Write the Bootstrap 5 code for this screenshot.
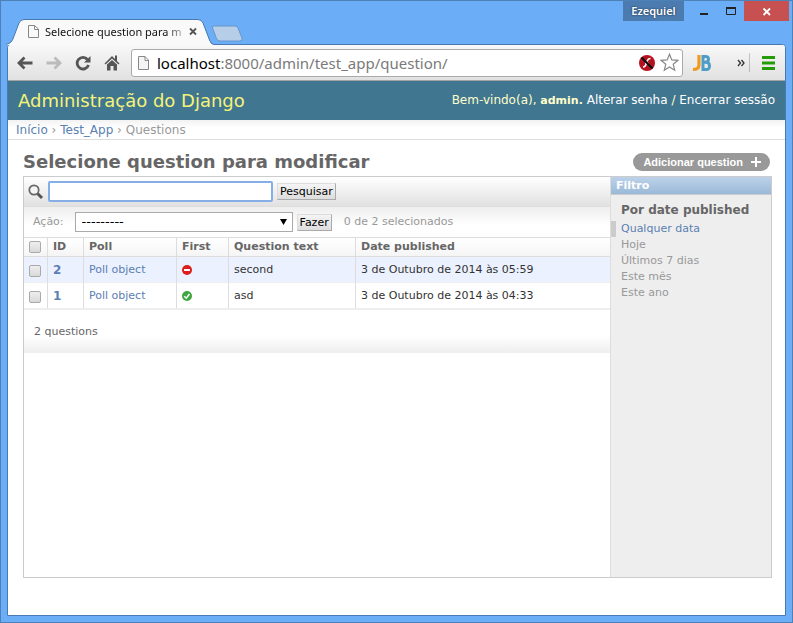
<!DOCTYPE html>
<html lang="pt-BR">
<head>
<meta charset="utf-8">
<meta name="viewport" content="width=device-width, initial-scale=1">
<title>Selecione question para modificar</title>
<link href="https://cdn.jsdelivr.net/npm/bootstrap@5.3.0/dist/css/bootstrap.min.css" rel="stylesheet">
<style>
body{background:#6badf6;border:1px solid #4d82b8;font-family:"DejaVu Sans",Verdana,sans-serif;font-size:11px;line-height:16px;color:#333}
a{text-decoration:none;color:#5b80b2}
svg{display:block;flex:none}
button{font-family:inherit}
.ui-font{font-family:"Noto Sans","Open Sans",sans-serif}
.titlebar{height:43px}
.tab-item{width:208px;height:25px;margin-left:5px;padding-left:21px;z-index:1}
.tab-shape{left:0;top:0}
.tab-title{font-size:11px;width:138px;margin-left:6px;white-space:nowrap;color:#111;-webkit-mask-image:linear-gradient(90deg,#000 88%,#0004);mask-image:linear-gradient(90deg,#000 88%,#0004)}
.new-tab{margin:0 0 2px -2px}
.user-tag{width:61px;height:20px;background:#4c7bb0;color:#fff;font-size:11px;text-shadow:0 0 2px #123;font-weight:600}
.win-controls{margin-right:3px}
.win-btn{border:0;background:transparent;height:20px;padding:0}
.win-close{background:#c75050;width:45px}
.frame{margin:0 6px 6px;border:1px solid #4779b2;border-radius:4px 4px 0 0;background:#fff}
.toolbar{height:36px;background:linear-gradient(#f8f8f8,#e1e1e1);border-bottom:1px solid #a3a3a3;border-radius:3px 3px 0 0;padding-left:9px;padding-right:9px}
.tool{border:0;background:transparent;padding:0;width:16px;margin-right:13px}
.omnibox{height:28px;background:#fff;border:1px solid #aaa;border-radius:3px;padding:0 3px 0 5px;margin-left:-2px}
.url{border:0;outline:0;background:transparent;font-size:15px;line-height:24px;color:#000;padding:0;margin-left:7px;white-space:nowrap}
.url span{color:#7a7a7a}
.site-head{background:#417690;height:39px;color:#ffc;padding:0 10px}
.site-head h1{font-size:18px;line-height:22px;color:#f4f379;margin:0;font-weight:400}
.site-head a{color:#fff}
.user-tools{font-size:12px}
.user-tools b{font-size:11px}
.crumbs{height:20px;font-size:12px;line-height:20px;padding:0 8px;color:#999;border-bottom:1px solid #ddd;background:linear-gradient(#f2f2f2,#fff 40%)}
.content{padding:10px 13px 37px 15px}
.content h2{font-size:18px;line-height:22px;font-weight:700;color:#666;margin:1px 0 0}
.add-link{background:#999;color:#fff;border-radius:9px;height:18px;padding:0 9px 0 10px;font:700 11px/18px "Liberation Sans",Arial,sans-serif;margin:3px 2px 0 0}
.add-link:hover{color:#fff}
.changelist{border:1px solid #ccc;margin-top:3px}
.search-row{height:30px;background:linear-gradient(#fff,#e1e1e1);border-bottom:1px solid #ddd;padding-left:4px}
.search-input{width:225px;height:21px;border:2px solid #86aee6;border-radius:2px;background:#fff;outline:0;padding:0 3px;margin-left:4px}
.classic-btn{background:linear-gradient(#f4f4f4,#ddd);border:1px solid #ccc;border-color:#ddd #aaa #aaa #ddd;color:#000;font-size:11px;line-height:15px;padding:0 2px;white-space:nowrap}
.action-row{height:30px;background:linear-gradient(#eee,#fff 60%);padding-left:9px;color:#999}
.action-select{appearance:none;display:block;width:218px;height:20px;margin:0 4px 0 11px;border:1px solid #aaa;border-radius:0;color:#000;font-size:13px;line-height:16px;padding:0 6px;background:#fff}
.select-arrow{right:10px;top:7px;pointer-events:none}
.results{width:100%;table-layout:fixed;border-collapse:separate;border-spacing:0}
.results th,.results td{padding:0 5px;border-left:1px solid #ddd;vertical-align:top;white-space:nowrap}
.results tr>:first-child{border-left:0}
.results thead th{height:20px;line-height:18px;border-top:1px solid #ddd;border-bottom:1px solid #ddd;color:#666;background:linear-gradient(#fff,#f5f5f5)}
.results tbody th,.results tbody td{height:26px;line-height:16px;padding-top:5px;border-bottom:1px solid #eee}
.results tbody tr:first-child>*{background:#ebf1fe}
.results tbody th{font-size:12px}
.c-check{width:23px}.c-id{width:36px}.c-poll{width:93px}.c-first{width:52px}.c-text{width:127px}
.pick{appearance:none;display:block;width:12px;height:12px;margin:3px 0 0;border:1px solid #aaa;border-radius:2px;background:linear-gradient(#eee,#d9d9d9)}
.state{margin-top:3px}
.pager{height:44px;line-height:44px;padding-left:10px;color:#666;background:linear-gradient(#fff 60%,#eee);border-top:1px solid #eee}
.filters{width:161px;background:#eee;border-left:1px solid #ddd}
.filters h3{font-size:11px;line-height:17px;color:#fff;font-weight:700;background:linear-gradient(#bdd2ea,#9ab9d7);border-bottom:1px solid #ccc;padding-left:5px;margin:0}
.filters h4{font-size:12px;line-height:18px;color:#666;font-weight:700;padding-left:10px;margin:6px 0 2px}
.filters li a{display:block;color:#999;padding-left:10px}
.filters li.selected a{border-left:5px solid #ccc;padding-left:5px;color:#5b80b2}
</style>
<script src="https://cdn.jsdelivr.net/npm/bootstrap@5.3.0/dist/js/bootstrap.bundle.min.js"></script>
</head>
<body class="d-flex flex-column min-vh-100">
<header class="titlebar d-flex align-items-end ui-font">
  <div class="tab-item position-relative d-flex align-items-center">
    <svg class="tab-shape position-absolute" width="208" height="26" viewBox="0 0 208 26"><path d="M0 26V25.500Q5 24.500 6.500 21L13 4Q14.500.5 18 .5H192Q195.500.5 197 4L203.500 21Q205 25.500 208 25.500V26Z" fill="#f9f9f9"/><path d="M0 25.500Q5 24.500 6.500 21L13 4Q14.500.5 18 .5H192Q195.500.5 197 4L203.500 21Q205 25.500 208 25.500" fill="none" stroke="#4779b2"/></svg>
    <svg class="position-relative" width="12" height="15" viewBox="0 0 12 15"><path d="M1.500 1.500H7.500L11.500 5V13.500H1.500ZM7.500 1.500V5.500H11.500" fill="#fafafa" stroke="#888"/></svg>
    <span class="tab-title position-relative">Selecione question para m</span>
    <button class="win-btn position-relative d-flex align-items-center" aria-label="Fechar guia"><svg width="18" height="9" viewBox="0 0 18 9"><path d="M7 1.500 13 7.500M13 1.500 7 7.500" stroke="#555" stroke-width="1.800"/></svg></button>
  </div>
  <button class="win-btn new-tab h-auto" aria-label="Nova guia"><svg width="32" height="17" viewBox="0 0 32 17"><path d="M2.500 1H23Q25 1 26 3L30 13Q31 16 28 16H8Q5.500 16 4.500 13.500L.5 3Q0 1 2.500 1Z" fill="#b7cee8" stroke="#6596cb"/></svg></button>
  <div class="win-controls d-flex align-self-start ms-auto">
    <div class="user-tag d-flex align-items-center justify-content-center">Ezequiel</div>
    <button class="win-btn" aria-label="Minimizar"><svg width="34" height="20"><path d="M16 13H24" stroke="#222" stroke-width="2"/></svg></button>
    <button class="win-btn" aria-label="Maximizar"><svg width="26" height="20"><path d="M8.500 7.500H17.500V13.500H8.500Z" fill="none" stroke="#222"/><path d="M8 7H18" stroke="#222" stroke-width="2"/></svg></button>
    <button class="win-btn win-close" aria-label="Fechar"><svg width="45" height="20"><path d="M19.500 7.500 26 14M26 7.500 19.500 14" stroke="#fff" stroke-width="1.800"/></svg></button>
  </div>
</header>
<div class="frame d-flex flex-column flex-grow-1">
  <nav class="toolbar d-flex align-items-center" aria-label="Navegador">
    <button class="tool" aria-label="Voltar"><svg width="16" height="14"><path d="M15.500 7H2M7.500 1.500 2 7 7.500 12.500" fill="none" stroke="#555" stroke-width="2.800"/></svg></button>
    <button class="tool" aria-label="Avançar"><svg width="16" height="14"><path d="M.5 7H14M8.500 1.500 14 7 8.500 12.500" fill="none" stroke="#bbb" stroke-width="2.800"/></svg></button>
    <button class="tool" aria-label="Recarregar"><svg width="16" height="16"><path d="M12.500 4.500A5.800 5.800 0 1 0 13.500 10" fill="none" stroke="#555" stroke-width="2.800"/><path d="M15.500 1V7.500H9Z" fill="#555"/></svg></button>
    <button class="tool" aria-label="Início"><svg width="16" height="16"><path d="M8 1 11 4V.5H13V6L15.500 8.500 14.500 9.500 8 3.500 1.500 9.500.5 8.500Z" fill="#555"/><path d="M3 9.500 8 5 13 9.500V15.500H9.500V11H6.500V15.500H3Z" fill="#555"/></svg></button>
    <div class="omnibox d-flex flex-grow-1 align-items-center">
      <svg width="13" height="16" viewBox="0 0 13 16"><path d="M1.500 1.500H8L11.500 5V14.500H1.500ZM8 1.500V5.500H11.500" fill="#f4f4f4" stroke="#888"/></svg>
      <div class="url ui-font flex-grow-1" role="textbox" aria-label="Endereço">localhost<span>:8000/admin/test_app/question/</span></div>
      <svg class="me-1" width="18" height="18"><circle cx="9" cy="9" r="8" fill="#b51220"/><path d="M12.500 4.500Q9.500 4.500 8.500 9Q7.500 13 5 13M7 9.500H11" fill="none" stroke="#fff" stroke-width="1.500"/><path d="M3.500 3.500 14.500 14.500" stroke="#111" stroke-width="2.300"/></svg>
      <svg width="19" height="19" viewBox="0 0 19 19"><path d="M9.500 1.200 11.800 6.900 17.900 7.300 13.200 11.200 14.700 17.200 9.500 13.900 4.300 17.200 5.800 11.200 1.100 7.300 7.200 6.900Z" fill="#fff" stroke="#888" stroke-width="1.200"/></svg>
    </div>
    <svg class="ms-2" width="22" height="18" viewBox="0 0 22 18"><path d="M8 1V11Q8 15.500 2 15.500" fill="none" stroke="#f19a1c" stroke-width="3.200"/><path d="M12 2.500H14.500Q17.500 2.500 17.500 5.300T14.500 8.200H12M12 8.200H15Q18.500 8.200 18.500 12T15 15.500H12V1" fill="none" stroke="#4e9dc8" stroke-width="3"/></svg>
    <button class="win-btn ms-2 ps-3 h-auto" aria-label="Mais extensões"><svg width="8" height="8"><path d="M1 1 3.500 4 1 7M4.500 1 7 4 4.500 7" fill="none" stroke="#333" stroke-width="1.300"/></svg></button>
    <div class="vr ms-1 my-2"></div>
    <button class="win-btn ms-2 h-auto ps-1" aria-label="Menu"><svg width="14" height="14"><path d="M0 1.500H13M0 7H13M0 12.500H13" stroke="#259b08" stroke-width="3"/></svg></button>
  </nav>
  <div class="site-head d-flex align-items-center justify-content-between text-nowrap">
    <h1>Administração do Django</h1>
    <div class="user-tools">Bem-vindo(a), <b>admin.</b> <a href="#">Alterar senha</a> / <a href="#">Encerrar sessão</a></div>
  </div>
  <nav class="crumbs" aria-label="Trilha"><a href="#">Início</a> › <a href="#">Test_App</a> › Questions</nav>
  <main class="content d-flex flex-column flex-grow-1">
    <div class="d-flex justify-content-between align-items-start">
      <h2>Selecione question para modificar</h2>
      <a class="add-link d-flex align-items-center text-nowrap" href="#">Adicionar question<svg class="ms-2" width="10" height="10"><path d="M5 0V10M0 5H10" stroke="#fff" stroke-width="2"/></svg></a>
    </div>
    <div class="changelist d-flex flex-grow-1">
      <div class="flex-grow-1">
        <form class="search-row d-flex align-items-center" onsubmit="return false">
          <label for="q" aria-label="Pesquisar"><svg width="16" height="16"><path d="M9.500 9.500 14 14" stroke="#555" stroke-width="3"/><circle cx="6" cy="6" r="4.700" fill="#f4f4f4" stroke="#666" stroke-width="1.700"/></svg></label>
          <input class="search-input" id="q" type="text">
          <button class="classic-btn ms-1">Pesquisar</button>
        </form>
        <form class="action-row d-flex align-items-center" onsubmit="return false">
          <label for="action">Ação:</label>
          <div class="position-relative"><select class="action-select" id="action"><option>---------</option></select><svg class="select-arrow position-absolute" width="7" height="6"><path d="M0 0H7L3.500 6Z" fill="#000"/></svg></div>
          <button class="classic-btn">Fazer</button>
          <span class="ms-2 ps-1">0 de 2 selecionados</span>
        </form>
        <table class="results">
          <colgroup><col class="c-check"><col class="c-id"><col class="c-poll"><col class="c-first"><col class="c-text"><col></colgroup>
          <thead><tr><th><input class="pick" type="checkbox" aria-label="Selecionar tudo"></th><th>ID</th><th>Poll</th><th>First</th><th>Question text</th><th>Date published</th></tr></thead>
          <tbody>
            <tr><td><input class="pick" type="checkbox" aria-label="Selecionar 2"></td><th><a href="#">2</a></th><td><a href="#">Poll object</a></td><td><svg class="state" width="10" height="10"><circle cx="5" cy="5" r="5" fill="#dd1c1c"/><path d="M2 5H8" stroke="#fff" stroke-width="2"/></svg></td><td>second</td><td>3 de Outubro de 2014 às 05:59</td></tr>
            <tr><td><input class="pick" type="checkbox" aria-label="Selecionar 1"></td><th><a href="#">1</a></th><td><a href="#">Poll object</a></td><td><svg class="state" width="10" height="10"><circle cx="5" cy="5" r="5" fill="#3fa63f"/><path d="M2.300 5.200 4.300 7.200 7.500 3" fill="none" stroke="#fff" stroke-width="1.500"/></svg></td><td>asd</td><td>3 de Outubro de 2014 às 04:33</td></tr>
          </tbody>
        </table>
        <div class="pager">2 questions</div>
      </div>
      <aside class="filters flex-shrink-0">
        <h3>Filtro</h3>
        <h4>Por date published</h4>
        <ul class="list-unstyled mb-0">
          <li class="selected"><a href="#">Qualquer data</a></li>
          <li><a href="#">Hoje</a></li>
          <li><a href="#">Últimos 7 dias</a></li>
          <li><a href="#">Este mês</a></li>
          <li><a href="#">Este ano</a></li>
        </ul>
      </aside>
    </div>
  </main>
</div>
</body>
</html>
